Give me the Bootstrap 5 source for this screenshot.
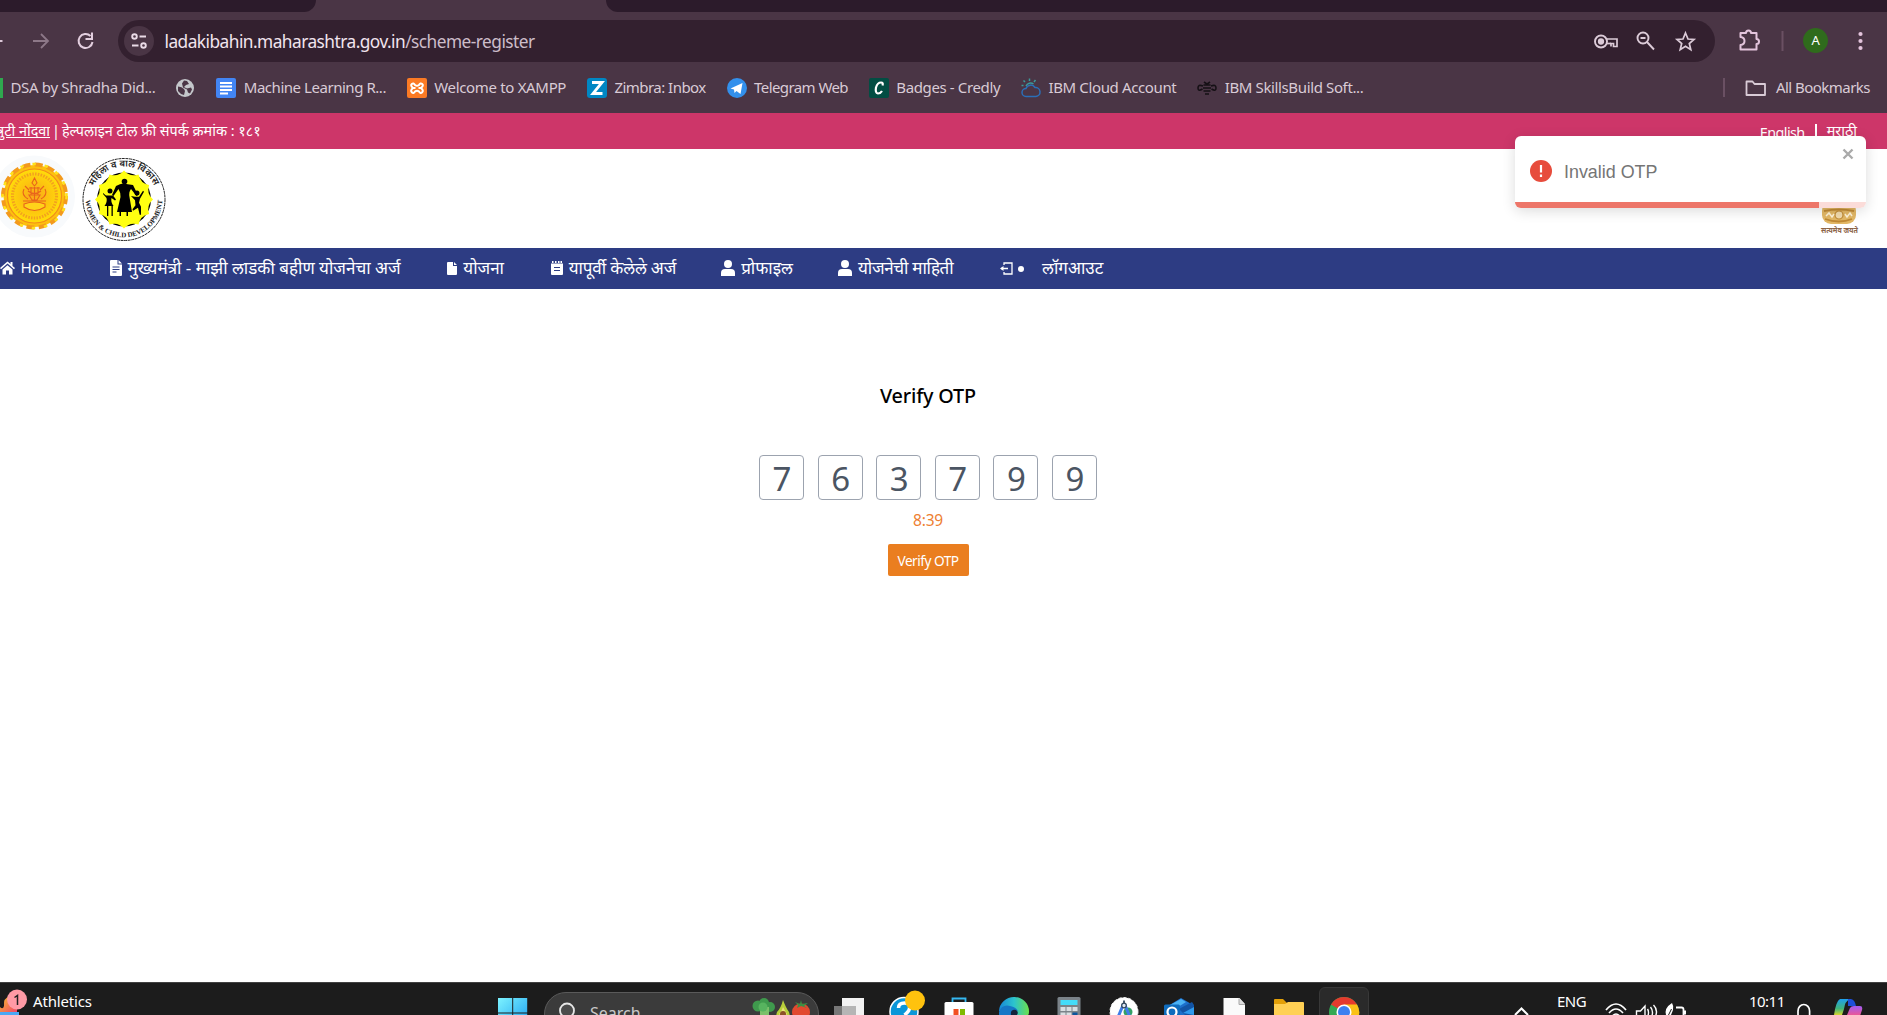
<!DOCTYPE html>
<html lang="mr">
<head>
<meta charset="utf-8">
<title>Verify OTP</title>
<link href="https://cdn.jsdelivr.net/npm/bootstrap@5.3.0/dist/css/bootstrap.min.css" rel="stylesheet">
<style>
body{width:1887px;height:1015px;overflow:hidden;font-family:"Noto Sans","Noto Sans Devanagari",sans-serif;background:#fff;line-height:1}
svg{display:block;flex:none;overflow:visible}
span,a{white-space:nowrap;flex:none}
.t1{letter-spacing:-.16px}.t3{letter-spacing:-.33px}.t4{letter-spacing:-.37px}.t45{letter-spacing:-.46px}.t5{letter-spacing:-.53px}.t6{letter-spacing:-.58px}
.tabstrip{height:12px;background:#4a3545}
.tab-idle{background:#2c1b2b}
.tab-left{width:316px;border-bottom-right-radius:12px}
.tab-right{width:1281px;border-bottom-left-radius:12px}
.toolbar{height:58px;background:#4a3545;padding-top:8px}
.omni{width:1597px;height:42px;border-radius:21px;background:#33202f;color:#f1e4ee}
.chip{width:30px;height:30px;border-radius:50%;background:#4a3545;margin-left:6px}
.addr{font-size:17.3px;margin:2px 0 0 10.5px}
.addr i{font-style:normal;color:#cdbdca}
.avatar{width:25px;height:25px;border-radius:50%;background:#2f6b1c;color:#fff;font-size:13px;margin-top:8px}
.bookmarks{height:43px;background:#4a3545;color:#d9cbd6;font-size:15px;padding-bottom:8px}
.bm{display:flex;align-items:center;gap:7.5px;margin-right:20.8px;flex:none}
.bm:first-child{margin-right:20px}
.bm-all{margin-right:17px}
.sep{width:2px;height:19px;background:#6a5063}
.helpline{height:36px;background:#cd3669;color:#fff;font-size:14.4px}
.helpline-link{width:50px;height:24px;line-height:24px}
.helpline-bar{margin:0 2px 0 2px}
.helpline-right{margin-right:30px}
.lang-bar{width:2px;height:15px;background:#fff;margin:0 10px 0 10px}
.crest{height:99px}
.crest-right{margin-left:auto;margin-right:29px;padding-top:58px}
.mainnav{height:41px;background:#2d3c83;color:#fff;font-size:17px;padding-bottom:1px}
.mainnav span{position:relative;top:-1px}
.mainnav .nav-home{font-size:15.3px;top:0;margin-left:5.5px;width:46px;letter-spacing:-.3px}
.nav-gap{margin-left:46.700px}
.nav-txt{margin-left:6px}
.stage{height:693px;width:1856px}
.otp-title{font-size:19.8px;font-weight:500;color:#000;margin-top:96.500px}
.otp-row{margin-top:49.500px;gap:13.6px}
.otp-box{width:45px;height:45px;border:1px solid #9ca3af;border-radius:4px;color:#4b5563;font-size:33px;padding:3px 0 0 1px}
.timer{color:#ee7f33;font-size:15.5px;margin-top:13px}
.btn-otp{background:#ea7e1f;color:#fff;border:0;border-radius:2px;width:81px;height:32px;font-size:13.7px;padding:0;margin-top:15.500px;line-height:34px}
.btn-otp:hover{background:#ea7e1f;color:#fff}
.note{position:absolute;left:1515px;top:136px;width:351px;height:72px;border-radius:6px;background:#fff;overflow:hidden;font-family:"Liberation Sans",sans-serif;color:#757575;font-size:17.900px;padding:0 0 2px 15px;box-shadow:0 3px 14px rgba(0,0,0,.14)}
.note-x{position:absolute;right:12px;top:12px}
.note-bar{position:absolute;left:0;bottom:0;width:100%;height:6px;background:#fbdcd9}
.note-bar div{height:6px;background:#ed7669;width:304px}
.taskbar{height:33px;background:#1c1c1c;border-top:1px solid #414141;color:#fff;font-size:15px;overflow:hidden}
.tb-left{width:498px}
.tb-news{margin:10.500px 0 0 5px}
.pill{width:275px;height:44px;border-radius:22px;background:#3b3b3b;border:1px solid #5a5a5a;margin:9px 2px 0 16px;color:#c9c9c9;font-size:16px;flex:none}
.pill span{margin:11.500px 0 0 15px}
.tb-app{width:55px;height:32px;display:flex;justify-content:center;flex:none}
.tile{width:50px;height:48px;border-radius:6px;background:#2a2a2a;border:1px solid #383838;margin-top:4px;display:flex;justify-content:center}
.tray{margin-left:auto}
.tray-lang{margin:11px 0 0 26px;width:30px}
.tray-time{margin:10.500px 0 0 60px;width:37px}
</style>
</head>
<body>
<div class="tabstrip d-flex justify-content-between"><div class="tab-idle tab-left"></div><div class="tab-idle tab-right"></div></div>

<div class="toolbar d-flex align-items-start">
  <svg width="118" height="42" viewBox="0 0 118 42" fill="none" stroke-width="2"><path d="M-8 21H2.500" stroke="#dcc9d8"/><path d="M33 21h14M41 14l7 7-7 7" stroke="#8d7888" stroke-width="1.800"/><path d="M90.500 16A7 7 0 1 0 92.500 22M92 12.500V19h-6.500" stroke="#e3cfdf"/></svg>
  <div class="omni d-flex align-items-center">
    <div class="chip d-flex align-items-center justify-content-center"><svg width="16" height="16" viewBox="0 0 16 16" fill="none" stroke="#eadbe7" stroke-width="1.900"><circle cx="3.500" cy="3.500" r="2.300"/><path d="M8.500 3.500H15M1 12.500h6.500"/><circle cx="12.500" cy="12.500" r="2.300"/></svg></div>
    <span class="addr t5">ladakibahin.maharashtra.gov.in<i>/scheme-register</i></span>
    <svg class="ms-auto me-3" width="106" height="24" viewBox="0 0 106 24" fill="none" stroke="#dccbd8" stroke-width="1.900">
      <circle cx="8" cy="12.500" r="6"/><circle cx="8" cy="12.500" r="2.200" fill="#dccbd8"/><path d="M13.500 10h10.500v7.500h-3.500v-3H18v3" stroke-width="1.700"/><path d="M13.500 14.500H18" stroke-width="1.700"/>
      <circle cx="50" cy="9" r="5.500"/><path d="M54 13l7 7.500M47.500 9h5"/>
      <path d="M92.500 4l2.500 6 6 .5-4.700 4 1.500 6.200-5.300-3.400-5.300 3.400 1.500-6.200-4.700-4 6-.5z" stroke-width="1.700"/>
    </svg>
  </div>
  <svg width="88" height="42" viewBox="0 0 88 42" fill="none" stroke="#e3c4dc" stroke-width="2"><path d="M25.500 13h5.500a2.500 2.500 0 0 1 5 0h5.500v6a2.500 2.500 0 0 1 0 5v5.500h-16v-4.500q4-.5 4-4t-4-4z" stroke-linejoin="round"/><path d="M67.500 11v20" stroke="#6a5063"/></svg>
  <div class="avatar t1 d-flex align-items-center justify-content-center">A</div>
  <svg width="59" height="42" viewBox="0 0 59 42" fill="#e3c4dc"><circle cx="32.500" cy="14" r="2.100"/><circle cx="32.500" cy="21" r="2.100"/><circle cx="32.500" cy="28" r="2.100"/></svg>
</div>

<div class="bookmarks d-flex align-items-center">
  <div class="bm"><svg width="3" height="20"><rect width="3" height="20" fill="#2fa84f"/></svg><span class="t3">DSA by Shradha Did...</span></div>
  <div class="bm"><svg width="20" height="20" viewBox="0 0 20 20"><circle cx="10" cy="10" r="9" fill="#c4c7cb"/><path d="M3 8.500q4 0 6 2.500l1 2-1 4q-4-1-6-4zM9 2.500l3 .5 2 3-3 1-2 2 3 1.500 4-1 1 2-2 4-2-1-1-3-4-2-1-4z" fill="#4a3545"/></svg></div>
  <div class="bm"><svg width="20" height="20"><rect width="20" height="20" rx="2" fill="#4285f4"/><path d="M4 5h12M4 8.500h12M4 12h12M4 15.500h8" stroke="#fff" stroke-width="2"/></svg><span class="t45">Machine Learning R...</span></div>
  <div class="bm"><svg width="20" height="20" fill="none"><rect width="20" height="20" rx="2" fill="#fb7a24"/><path d="M8 7Q6.500 4.500 4.800 6T6 10q-3 2.500-1.200 4.300T8 13.500q2-1.500 4 0 1.500 2.500 3.200.8T14 10q3-2.500 1.200-4T12 7Q10 8.500 8 7zM6 10h2.500M11.500 10H14" stroke="#fff" stroke-width="2"/></svg><span class="t3">Welcome to XAMPP</span></div>
  <div class="bm"><svg width="20" height="20"><rect width="20" height="20" rx="3" fill="#0087c3"/><path d="M5 4.500h10L6 15.500h9.500" stroke="#fff" stroke-width="2.800" fill="none"/></svg><span class="t5">Zimbra: Inbox</span></div>
  <div class="bm"><svg width="20" height="20"><circle cx="10" cy="10" r="10" fill="#3390ec"/><path d="M3.500 10.500L15.500 5l-2 11-4-3-2 2-.5-3.500z" fill="#fff"/></svg><span class="t6">Telegram Web</span></div>
  <div class="bm"><svg width="20" height="20" fill="none"><rect width="20" height="20" rx="2" fill="#024d43"/><path d="M13.500 7.500q1-3-1.500-3-3.500 0-5 5-1 5.500 2 6 2.500 0 4-2.500" stroke="#fff" stroke-width="2.200"/></svg><span class="t4">Badges - Credly</span></div>
  <div class="bm"><svg width="20" height="20" fill="none" stroke-width="1.500"><path d="M5 18.500a4 4 0 0 1 0-8 5 5 0 0 1 9-1 4.500 4.500 0 0 1 1 9z" stroke="#2b6fb8"/><path d="M5 8a5 5 0 0 1 7.500-2M8.500 3V.5M4 4L2.500 2.500M13 4l1.500-2M2.500 7.500H.5" stroke="#3b9a9a"/></svg><span class="t4">IBM Cloud Account</span></div>
  <div class="bm"><svg width="20" height="20" fill="none" stroke="#151015" stroke-width="1.600"><path d="M7 4l2 1.500h2L13 4M6.500 7h7M6 10h8M6.500 13h7M8 16h4M6 8Q1 6 1 10t4.500 1M14 8q5-2 5 2t-4.500 1"/></svg><span class="t4">IBM SkillsBuild Soft...</span></div>
  <div class="bm-all d-flex align-items-center ms-auto"><div class="sep"></div><svg width="51" height="20" viewBox="0 0 51 20" fill="none" stroke="#d9cbd6" stroke-width="1.800"><path d="M21.500 3.500h6l2 2.500h10.500v11h-18.500z" stroke-linejoin="round"/></svg><span class="t5">All Bookmarks</span></div>
</div>

<div class="helpline d-flex align-items-center">
  <div class="helpline-link d-flex justify-content-end overflow-hidden"><a class="text-white text-decoration-underline">त्रुटी नोंदवा</a></div>
  <span class="helpline-bar">|</span><span>हेल्पलाइन टोल फ्री संपर्क क्रमांक : १८१</span>
  <div class="helpline-right d-flex align-items-center ms-auto"><span class="t6 pt-1">English</span><div class="lang-bar"></div><span>मराठी</span></div>
</div>

<div class="crest d-flex">
  <svg width="170" height="99" viewBox="0 149 170 99">
    <defs><radialGradient id="sealg"><stop offset="0" stop-color="#f9a51a"/><stop offset=".55" stop-color="#fdc50f"/><stop offset="1" stop-color="#ffdc0a"/></radialGradient></defs>
    <circle cx="34" cy="196.500" r="41" fill="#f8fafc"/>
    <circle cx="34.500" cy="196" r="31" fill="#fdc00f"/>
    <circle cx="34.500" cy="196" r="31.500" fill="none" stroke="#f39a1d" stroke-width="4" stroke-dasharray="8 4.370"/>
    <circle cx="34.500" cy="196" r="32" fill="none" stroke="#ffe11c" stroke-width="2.500" stroke-dasharray="3.500 8.870"/>
    <circle cx="34.500" cy="196" r="27" fill="url(#sealg)" stroke="#f28c1b" stroke-width="1.200"/>
    <circle cx="34.500" cy="196" r="22" fill="none" stroke="#f3a01f" stroke-width="3" stroke-dasharray="1.500 1.300"/>
    <g fill="none" stroke="#e8641c" stroke-width="1.100"><path d="M34.500 178l-2.500 5 2.500 3 2.500-3zM29 188h11M28 191q6.500 5 13 0M24 189q-3 6 4 10M45 189q3 6-4 10M23 201h23M26 204h17M29 195h11l-3 5h-5zM31 187v8M38 187v8M34.500 187v13M25 186l4 4M44 186l-4 4"/><path d="M24 207q10.500 7 21 0v-3q-10.500-4-21 0z" fill="#ffd21a"/></g>
    <circle cx="124" cy="199.500" r="41" fill="#fff" stroke="#222" stroke-width="1" stroke-dasharray="3 .6"/>
    <circle cx="124" cy="199.500" r="27" fill="#000"/>
    <path fill="#ff1" d="M124 170.500Q129.900 177.300 138.500 174.400Q140.300 183.200 149.100 185Q146.200 193.600 153 199.500Q146.200 205.400 149.100 214Q140.300 215.800 138.500 224.600Q129.900 221.700 124 228.500Q118.100 221.700 109.500 224.600Q107.700 215.800 98.900 214Q101.800 205.400 95 199.500Q101.800 193.600 98.900 185Q107.700 183.200 109.500 174.400Q118.100 177.300 124 170.500Z"/>
    <g fill="#000"><circle cx="124.500" cy="181.500" r="2.800"/><path d="M116 186q5-3 8-2.500t9 1.500l5 10-1.500 1-5.500-7q-2.500 3-1.500 8l2.500 15h-15l3.500-15q0-5-2-8l-5 7-1.500-1z"/><circle cx="110" cy="191" r="2.500"/><path d="M103 193l3 2.500h7l3 4-1 1-3.500-2.500q-1 4 2 8h-9q3-4 2-8l-3.500-4zM107 206h1.300v10H107zM111.500 206h1.300v10h-1.300zM119.500 211h1.500v5h-1.500zM126.500 211h1.500v5h-1.500z"/><circle cx="137" cy="193" r="2.500"/><path d="M131 196l4 .8h4l4-6 1 1-4 7-1 4 2 4v8h-1.300l-1.700-7-5 3-.5-1.500 3-4-.5-5z"/></g>
    <path id="arcT" d="M91 199.500A33 33 0 0 1 157 199.500" fill="none"/><path id="arcB" d="M88 186A38.300 38.300 0 1 0 160 186" fill="none"/>
    <text font-size="9.300" font-weight="600" fill="#222" text-anchor="middle"><textPath href="#arcT" startOffset="50%">महिला व बाल विकास</textPath></text>
    <text font-size="7" font-weight="700" fill="#222" font-family="Liberation Serif,serif" text-anchor="middle"><textPath href="#arcB" startOffset="50%">WOMEN &amp; CHILD DEVELOPMENT</textPath></text>
  </svg>
  <div class="crest-right"><svg width="37" height="34" viewBox="0 0 37 34"><rect x="1" y="-5" width="34" height="22" rx="9" fill="#e3b866"/><path d="M3 4q15-3 30 0M4 12q14 5 27 0" stroke="#c08a35" fill="none" stroke-width="1.800"/><circle cx="18" cy="8" r="4" fill="#f3dcae" stroke="#c08a35" stroke-width="1.200"/><path d="M5 9l3-3 3 4 2-3M24 7l2 3 3-4 2 3" stroke="#fff3d8" stroke-width="1.500" fill="none"/><text x="0" y="26" font-size="7.500" font-weight="700" fill="#8c6448" textLength="37" lengthAdjust="spacingAndGlyphs">सत्यमेव जयते</text></svg></div>
</div>

<div class="mainnav d-flex align-items-center">
  <svg width="15" height="14" viewBox="0 0 15 14" fill="#fff"><path d="M0 7L7.500.5 10.500 3V1h2v4L15 7l-1 1.200-6.500-5.600L1 8.200z"/><path d="M2.500 8.500l5-4.300 5 4.300V13.500H9v-4H6v4H2.500z"/></svg>
  <span class="nav-home">Home</span>
  <svg width="55" height="16" viewBox="-43 0 55 16"><path d="M0 1q0-1 1-1h6.500v4.500H12V15q0 1-1 1H1q-1 0-1-1zM8.500 0L12 3.500H8.500z" fill="#fff"/><path d="M2.500 7h7M2.500 9.500h7M2.500 12h4" stroke="#2d3c83"/></svg>
  <span class="nav-txt">मुख्यमंत्री - माझी लाडकी बहीण योजनेचा अर्ज</span>
  <svg class="nav-gap" width="10" height="13" viewBox="0 0 10 13"><path d="M0 1q0-1 1-1h5v4h4v8q0 1-1 1H1q-1 0-1-1zM7 0l3 3H7z" fill="#fff"/></svg>
  <span class="nav-txt">योजना</span>
  <svg class="nav-gap" width="12" height="14" viewBox="0 0 12 14"><path d="M0 2.500h12V13q0 1-1 1H1q-1 0-1-1zM1 0h1.500v2H1zM4 0h1.500v2H4zM7 0h1.500v2H7zM9.500 0H11v2H9.500z" fill="#fff"/><path d="M3 6.500h6M3 9.500h6" stroke="#2d3c83"/></svg>
  <span class="nav-txt t1">यापूर्वी केलेले अर्ज</span>
  <svg width="59" height="16" viewBox="-45 0 59 16" fill="#fff"><circle cx="7" cy="4" r="4"/><path d="M0 16v-3q0-4 4-4h6q4 0 4 4v3z"/></svg>
  <span class="nav-txt">प्रोफाइल</span>
  <svg width="59" height="16" viewBox="-45 0 59 16" fill="#fff"><circle cx="7" cy="4" r="4"/><path d="M0 16v-3q0-4 4-4h6q4 0 4 4v3z"/></svg>
  <span class="nav-txt t3">योजनेची माहिती</span>
  <svg class="nav-gap" width="36" height="13" viewBox="0 0 36 13"><path d="M4 3V1h8v11H4v-2M1 6.500h7" stroke="#fff" stroke-width="1.300" fill="none"/><path d="M0 6.500L3.500 4v5z" fill="#fff"/><circle cx="21" cy="7" r="3" fill="#fff"/></svg>
  <span class="nav-txt">लॉगआउट</span>
</div>

<main class="stage d-flex flex-column align-items-center">
  <div class="otp-title t1">Verify OTP</div>
  <div class="otp-row d-flex">
    <div class="otp-box d-flex align-items-center justify-content-center">7</div><div class="otp-box d-flex align-items-center justify-content-center">6</div><div class="otp-box d-flex align-items-center justify-content-center">3</div><div class="otp-box d-flex align-items-center justify-content-center">7</div><div class="otp-box d-flex align-items-center justify-content-center">9</div><div class="otp-box d-flex align-items-center justify-content-center">9</div>
  </div>
  <div class="timer t1">8:39</div>
  <button class="btn btn-otp t5">Verify OTP</button>
</main>

<footer class="taskbar d-flex align-items-start">
  <div class="tb-left d-flex">
    <svg width="28" height="32" viewBox="0 0 28 32"><defs><linearGradient id="wg" x1="0" y1="0" x2="1" y2="1"><stop offset="0" stop-color="#f6c32c"/><stop offset="1" stop-color="#f0456b"/></linearGradient></defs><path d="M0 24q3 3 4-1-1-8 6-10l7 10v6H0z" fill="url(#wg)"/><path d="M0 29h19v3H0z" fill="#4aa8f5"/><circle cx="17" cy="16.500" r="10" fill="#ff9aa5"/><path d="M14.500 14.500l3-2v9.500" stroke="#222" stroke-width="1.500" fill="none"/></svg>
    <span class="tb-news t1">Athletics</span>
  </div>
  <svg width="30" height="32" viewBox="0 0 30 32"><defs><linearGradient id="wl" x1="0" y1="0" x2="1" y2="1"><stop offset="0" stop-color="#7df3ff"/><stop offset="1" stop-color="#1a9df0"/></linearGradient></defs><path d="M0 15h14.200v14.500H0zM15.200 15h14v14.500h-14zM0 30.500h14.200V44H0zM15.200 30.500h14V44h-14z" fill="url(#wl)"/></svg>
  <div class="pill d-flex">
    <svg width="30" height="30" viewBox="0 0 30 30"><circle cx="22" cy="17.500" r="7" fill="#4b4b4b" stroke="#e6e6e6" stroke-width="1.800"/></svg>
    <span>Search</span>
    <svg class="ms-auto me-2" width="58" height="30" viewBox="0 0 58 30"><g fill="#3f9a4d"><circle cx="6" cy="13" r="5.500"/><circle cx="12" cy="10" r="5"/><circle cx="18" cy="14" r="5"/><path d="M8 14h9v12H8z" fill="#7cc06a"/><circle cx="11" cy="14" r="4.500" fill="#57b45f"/></g><path d="M31 7q3 8 6 12 3 10-6 10t-6-10q4-4 6-12z" fill="#b8cf3a"/><path d="M31 14q2 4 4 7-4 5-8 0 3-3 4-7z" fill="#ece27a"/><circle cx="31" cy="21" r="3" fill="#8c5226"/><ellipse cx="49" cy="19" rx="9" ry="8.500" fill="#e2492f"/><path d="M43 9l5 2 1-4 1 4 6-1-4 3 3 2-6-2-4 2 1-3z" fill="#3b8f44"/></svg>
  </div>
  <div class="tb-app"><svg width="30" height="32" viewBox="0 0 30 32"><path d="M8 15h22v17H8z" fill="#f2f2f2"/><path d="M0 23h22v9H0z" fill="#777"/><path d="M8 23h14v9H8z" fill="#b5b5b5"/></svg></div>
  <div class="tb-app"><svg width="30" height="32" viewBox="0 0 30 32"><circle cx="15" cy="28.500" r="14" fill="#0a96d8" stroke="#fff" stroke-width="1.500"/><path d="M9.500 25q0-5 6-5t5 5q0 3-5 7" fill="none" stroke="#fff" stroke-width="3.500"/><circle cx="26" cy="17.500" r="10" fill="#ffc20e"/></svg></div>
  <div class="tb-app"><svg width="30" height="32" viewBox="0 0 30 32"><path d="M8.500 20v-4.500h13V20" fill="none" stroke="#35b8f1" stroke-width="1.800"/><rect x=".5" y="19" width="29" height="20" rx="1.500" fill="#fff"/><path d="M9.500 26h5v6h-5z" fill="#f25022"/><path d="M16 26h5v6h-5z" fill="#7fba00"/></svg></div>
  <div class="tb-app"><svg width="30" height="32" viewBox="0 0 30 32"><defs><linearGradient id="ed"><stop offset="0" stop-color="#1787d6"/><stop offset=".5" stop-color="#2cc3ce"/><stop offset="1" stop-color="#6be04c"/></linearGradient></defs><path d="M0 28a15 14.500 0 0 1 30 1q0 3-2 4H11z" fill="url(#ed)"/><path d="M0 29q3-8 11-6 6 1 8 5-5-2-7 4H0z" fill="#1677c6"/><path d="M12 32q-1-6 5-5 3 2 1 5z" fill="#14243c"/></svg></div>
  <div class="tb-app"><svg width="30" height="32" viewBox="0 0 30 32"><rect x="3.500" y="14" width="23" height="28" rx="1.500" fill="#7b8389"/><path d="M6.500 17h17v5h-17z" fill="#44dcf9"/><path d="M6.500 24h5v4h-5zM12.500 24h5v4h-5zM18.500 24h5v4h-5zM6.500 29.500h5v4h-5zM12.500 29.500h5v4h-5z" fill="#d9dee2"/><path d="M18.500 29.500h5v4h-5z" fill="#0b549c"/></svg></div>
  <div class="tb-app"><svg width="30" height="32" viewBox="0 0 30 32"><circle cx="15" cy="28.500" r="14" fill="#fff" stroke="#eee" stroke-dasharray="3 2"/><circle cx="19" cy="29" r="4.500" fill="#34a065"/><path d="M14.500 21l-5 12M15.500 21l5 12" stroke="#3f7de8" stroke-width="3"/><circle cx="15" cy="22.500" r="2.300" fill="#dfe8f5" stroke="#34495e" stroke-width="1.300"/><path d="M15 17.500v3" stroke="#34495e" stroke-width="1.800"/></svg></div>
  <div class="tb-app"><svg width="30" height="32" viewBox="0 0 30 32"><path d="M4 23l13-8 12 7v11H4z" fill="#1d6fcb"/><path d="M6 22l11-6 5 3-11 7z" fill="#4ab2f5"/><path d="M15 26l13-7 2 3v10h-9z" fill="#1254a5"/><path d="M19 30l11-6v8z" fill="#2f9bee"/><rect x="0" y="21.500" width="16" height="16" rx="1.500" fill="#0f6cbd"/><circle cx="8" cy="29" r="4.500" fill="none" stroke="#fff" stroke-width="2.200"/></svg></div>
  <div class="tb-app"><svg width="30" height="32" viewBox="0 0 30 32"><path d="M4.500 15h16l5.500 6v12H4.500z" fill="#fafafa"/><path d="M20 15.500V21.500h6" fill="#ddd" stroke="#a9a9a9"/></svg></div>
  <div class="tb-app"><svg width="30" height="32" viewBox="0 0 30 32"><path d="M0 17q0-1 1-1h8l4 4v7H0z" fill="#e3a008"/><path d="M0 21h11l3-2h15q1 0 1 1v13H0z" fill="#ffd054"/></svg></div>
  <div class="tb-app"><div class="tile"><svg width="30" height="28" viewBox="0 5 30 28"><circle cx="15" cy="29" r="15" fill="#34a853"/><path d="M15 29L2 21.500A15 15 0 0 1 28 21.500z" fill="#e53a2d"/><path d="M15 21.500h13A15 15 0 0 1 28 37H15z" fill="#fbc116"/><circle cx="15" cy="29" r="7.500" fill="#fff"/><circle cx="15" cy="29" r="6" fill="#3d80f0"/></svg></div></div>
  <div class="tray d-flex align-items-start">
    <svg width="15" height="32" viewBox="-2 0 15 32" fill="none" stroke="#fff" stroke-width="2"><path d="M1 32l6.500-6.500L14 32"/></svg>
    <span class="tray-lang t5 ps-1">ENG</span>
    <svg width="102" height="32" viewBox="-2 0 102 32" fill="none" stroke="#fff" stroke-width="1.700"><path d="M21 27q10-12 20 0M24 30q7-8 14 0M27.500 33q3.500-4 7 0"/><path d="M51.500 36v-8h4l4.500-5v13M62.500 26q2 3 0 8M65.500 24q4 5 0 12M68.500 22q6 6 0 15" stroke-width="1.400"/><path d="M91 24.500h5.500q2 0 2 2V34" stroke-width="1.800"/><path d="M81 32q-2-7 6-12 2 3 1 7l-2 5zM98 27.500h3v4h-3z" fill="#fff" stroke="none"/><path d="M83 33l3.500-7" stroke="#1c1c1c" stroke-width="1"/></svg>
    <span class="tray-time t5 ps-1">10:11</span>
    <svg width="105" height="32" viewBox="0 0 105 32" fill="none"><defs><linearGradient id="cp1" x1="0" y1="0" x2="0" y2="1"><stop offset="0" stop-color="#1ea0ee"/><stop offset=".6" stop-color="#41b57a"/><stop offset="1" stop-color="#d8d62e"/></linearGradient><linearGradient id="cp2" x1="0" y1="0" x2="0" y2="1"><stop offset="0" stop-color="#a35cf4"/><stop offset="1" stop-color="#f2578c"/></linearGradient></defs><path d="M16 32v-4a5.800 6.500 0 0 1 11.600 0v4" stroke="#fff" stroke-width="1.700"/><path d="M52 32q2-14 6-16h10q-5 2-6 10l-2 6z" fill="url(#cp1)"/><path d="M66 16h3q4 1 5 7h-8z" fill="#1f4fd8"/><path d="M65 32l3-7q1-2 4-2h6q3 0 2 4l-2 6z" fill="url(#cp2)"/></svg>
  </div>
</footer>

<div class="note d-flex align-items-center"><svg width="22" height="22"><circle cx="11" cy="11" r="11" fill="#e74c3c"/><path d="M11 5v7.500M11 14.500v2.500" stroke="#fff" stroke-width="2.200"/></svg><span class="ps-2 ms-1 pt-1">Invalid OTP</span>
<svg class="note-x" width="12" height="12"><path d="M1.500 1.500l9 9M10.500 1.500l-9 9" stroke="#aaa" stroke-width="2.400"/></svg><div class="note-bar"><div></div></div></div>
<script src="https://cdn.jsdelivr.net/npm/bootstrap@5.3.0/dist/js/bootstrap.bundle.min.js"></script>
</body>
</html>
